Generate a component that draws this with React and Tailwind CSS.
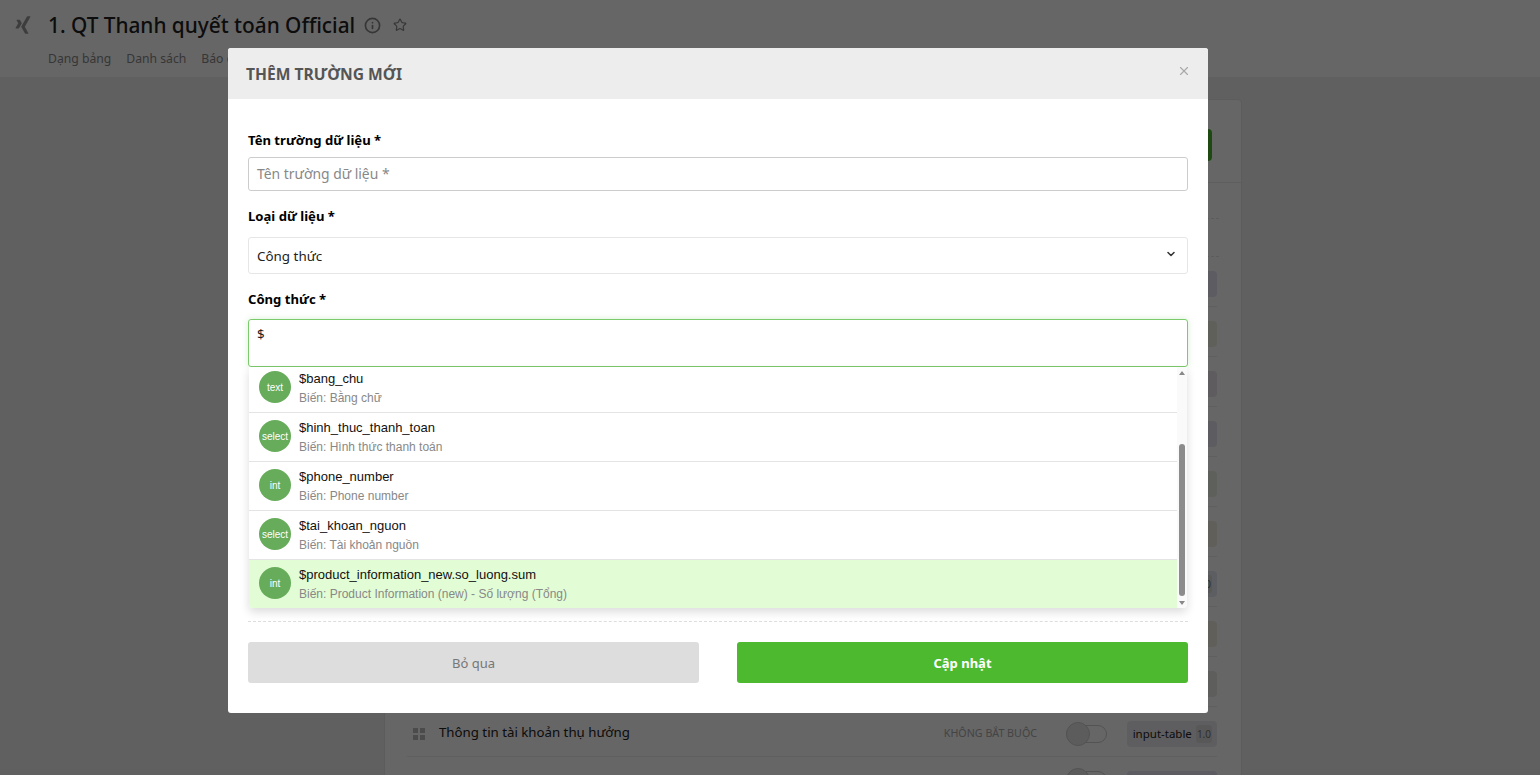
import { ChevronDown, Info, Star, X } from 'lucide-react';
import { FaXing } from 'react-icons/fa';

const tagColors = [
  'bg-[#e6e6f4]',
  'bg-[#f0f0e2]',
  'bg-[#ebe6ec]',
  'bg-[#e6e6f2]',
  'bg-[#e8efe4]',
  'bg-[#f0ede0]',
  'bg-[#e6eaf6]',
  'bg-[#f0eee2]',
  'bg-[#eaeae6]',
  'bg-[#ececf0]',
];

const suggestions = [
  { type: 'text', name: '$bang_chu', desc: 'Biến: Bằng chữ' },
  { type: 'select', name: '$hinh_thuc_thanh_toan', desc: 'Biến: Hình thức thanh toán' },
  { type: 'int', name: '$phone_number', desc: 'Biến: Phone number' },
  { type: 'select', name: '$tai_khoan_nguon', desc: 'Biến: Tài khoản nguồn' },
  { type: 'int', name: '$product_information_new.so_luong.sum', desc: 'Biến: Product Information (new) - Số lượng (Tổng)', active: true },
];

function FieldToggle() {
  return (
    <div className="relative w-[41px] h-[18px] rounded-full border border-[#cfcfcf] bg-white">
      <div className="absolute -left-px -top-[4px] w-6 h-6 rounded-full border border-[#cfcfcf] bg-[#e6e6e6]" />
    </div>
  );
}

function Background() {
  return (
    <div className="h-screen overflow-hidden bg-[#f0f0f0] font-['Noto_Sans',sans-serif]">
      <header className="h-[78px] bg-white border-b border-[#f0f0f0]">
        <div className="flex items-center h-[50px]">
          <FaXing className="ml-[13px] text-[#999] text-[20px]" />
          <h1 className="ml-[15px] text-[20.8px] font-medium text-[#222] leading-none">1. QT Thanh quyết toán Official</h1>
          <Info className="ml-[9px] w-[17px] h-[17px] text-[#888]" strokeWidth={2.4} />
          <Star className="ml-[12px] w-[14px] h-[14px] text-[#888]" />
        </div>
        <nav className="flex gap-[15px] pl-[48px] text-[12.2px] leading-[18px] text-[#888]">
          <span>Dạng bảng</span>
          <span>Danh sách</span>
          <span>Báo cáo</span>
        </nav>
      </header>

      <section className="ml-[384px] mt-[21px] w-[858px] rounded-t bg-white border border-[#e6e6e6]">
        <div className="flex justify-end h-[83px] pt-[29px] pr-[29px] border-b border-[#ececec]">
          <div className="w-[120px] h-8 rounded bg-[#4cb92f]" />
        </div>
        <div className="h-[36px] mx-[22px] border-b border-dashed border-[#e6e6e6]" />
        <div className="h-[38px] mx-[22px] border-b border-dashed border-[#e6e6e6]" />
        <div className="ml-[22px] mr-[24px]">
          {tagColors.map((color, index) => (
            <div key={index} className="flex items-start justify-end h-[50px] pt-[14px] border-b border-[#eeeeee]">
              {index === 9 && (
                <div className="flex-1 flex items-center h-[26px] pl-[6px]">
                  <div className="grid grid-cols-2 gap-[2px]">
                    <span className="w-[5px] h-[5px] bg-[#bbb]" />
                    <span className="w-[5px] h-[5px] bg-[#bbb]" />
                    <span className="w-[5px] h-[5px] bg-[#bbb]" />
                    <span className="w-[5px] h-[5px] bg-[#bbb]" />
                  </div>
                  <span className="ml-[14px] -mt-[3px] text-[13.25px] text-[#222]">Thông tin tài khoản thụ hưởng</span>
                  <span className="ml-auto mr-[29px] -mt-[2px] text-[10.7px] text-[#aaa]">KHÔNG BẮT BUỘC</span>
                  <FieldToggle />
                  <span className="w-5" />
                </div>
              )}
              <div className={`flex items-center justify-end w-[90px] h-[26px] gap-1 pr-[5px] rounded ${color}`}>
                {index === 9 && <span className="text-[11.5px] text-[#222]">input-table</span>}
                {(index === 6 || index === 9) && (
                  <span className="px-px rounded-[3px] bg-[#dcdcdc] text-[10px] leading-[18px] text-[#777]">1.0</span>
                )}
              </div>
            </div>
          ))}
          <div className="flex items-start justify-end pt-[14px]">
            <div className="mr-5">
              <FieldToggle />
            </div>
            <div className={`w-[90px] h-[26px] rounded ${tagColors[0]}`} />
          </div>
        </div>
      </section>
    </div>
  );
}

function SuggestionRow({ item, first }) {
  return (
    <div
      className={[
        'flex gap-2 pl-[10px]',
        first ? 'h-[45px] pt-1' : 'h-[49px] pt-[7px] border-t border-[#e4e4e4]',
        item.active ? 'bg-[#e2fdd5]' : 'bg-white',
      ].join(' ')}
    >
      <div className="flex items-center justify-center w-8 h-8 shrink-0 rounded-full bg-[#67ac5b] text-[10px] font-medium text-white">{item.type}</div>
      <div className="-mt-[2px]">
        <div className="text-[13px] leading-[20px] text-[#111]">{item.name}</div>
        <div className="text-[12px] leading-[19px] text-[#888]">{item.desc}</div>
      </div>
    </div>
  );
}

function FormulaDropdown() {
  return (
    <div className="flex h-[241px] mx-px rounded-b bg-white shadow-[0_4px_10px_rgba(0,0,0,0.14)] overflow-hidden font-['Liberation_Sans',sans-serif]">
      <div className="flex-1">
        {suggestions.map((item, index) => (
          <SuggestionRow key={item.name} item={item} first={index === 0} />
        ))}
      </div>
      <div className="flex flex-col items-center w-[10px] bg-[#fafafa]">
        <svg className="mt-[4px] shrink-0" width="6" height="4" viewBox="0 0 6 4">
          <path d="M3 0 6 4H0z" fill="#888" />
        </svg>
        <div className="mt-[69px] w-[6px] h-[152px] rounded-full bg-[#8c8c8c]" />
        <svg className="mt-[5px] shrink-0" width="6" height="4" viewBox="0 0 6 4">
          <path d="M0 0H6L3 4z" fill="#888" />
        </svg>
      </div>
    </div>
  );
}

function AddFieldModal() {
  return (
    <div className="fixed inset-0 bg-black/60 pl-[228px] pt-[48px] font-['Noto_Sans',sans-serif]">
      <div className="w-[980px] h-[665px] rounded-[3px] bg-white overflow-hidden">
        <div className="flex items-center justify-between h-[51px] pl-[18px] pr-[17px] bg-[#ededed]">
          <h2 className="mt-[3px] text-[15.6px] font-bold text-[#555]">THÊM TRƯỜNG MỚI</h2>
          <X className="w-[14px] h-[14px] -mt-[5px] text-[#aaa]" />
        </div>

        <div className="px-5 pt-[31px]">
          <label className="block mb-[7px] text-[13.1px] leading-5 font-bold text-black">Tên trường dữ liệu *</label>
          <div className="flex items-center h-[34px] px-2 pt-[1px] rounded-[3px] border border-[#cccccc] text-[13.9px] text-[#888]">Tên trường dữ liệu *</div>

          <label className="block mt-[15px] mb-[11px] text-[13.1px] leading-5 font-bold text-black">Loại dữ liệu *</label>
          <div className="flex items-center justify-between h-[37px] pl-2 pr-[10px] rounded-[3px] border border-[#e6e6e6] text-[13.4px] text-[#222]">
            <span className="mt-[1px]">Công thức</span>
            <ChevronDown className="w-[12px] h-[12px] -mt-[4px] text-[#333]" strokeWidth={3} />
          </div>

          <label className="block mt-[15px] mb-[10px] text-[13.1px] leading-5 font-bold text-black">Công thức *</label>
          <div className="h-[48px] px-2 pt-[4px] rounded-[3px] border border-[#7bca6b] shadow-[0_0_6px_rgba(123,202,107,0.3)] text-[13.4px] leading-[20px] text-[#222]">$</div>

          <FormulaDropdown />

          <div className="mt-[13px] border-t border-dashed border-[#dddddd]" />

          <div className="flex justify-between mt-[20px]">
            <button className="w-[451px] h-[41px] pt-[2px] rounded-[3px] bg-[#dddddd] text-[13px] text-[#777]">Bỏ qua</button>
            <button className="w-[451px] h-[41px] pt-[2px] rounded-[3px] bg-[#4cb92f] text-[13px] font-bold text-white">Cập nhật</button>
          </div>
        </div>
      </div>
    </div>
  );
}

export default function App() {
  return (
    <>
      <Background />
      <AddFieldModal />
    </>
  );
}
